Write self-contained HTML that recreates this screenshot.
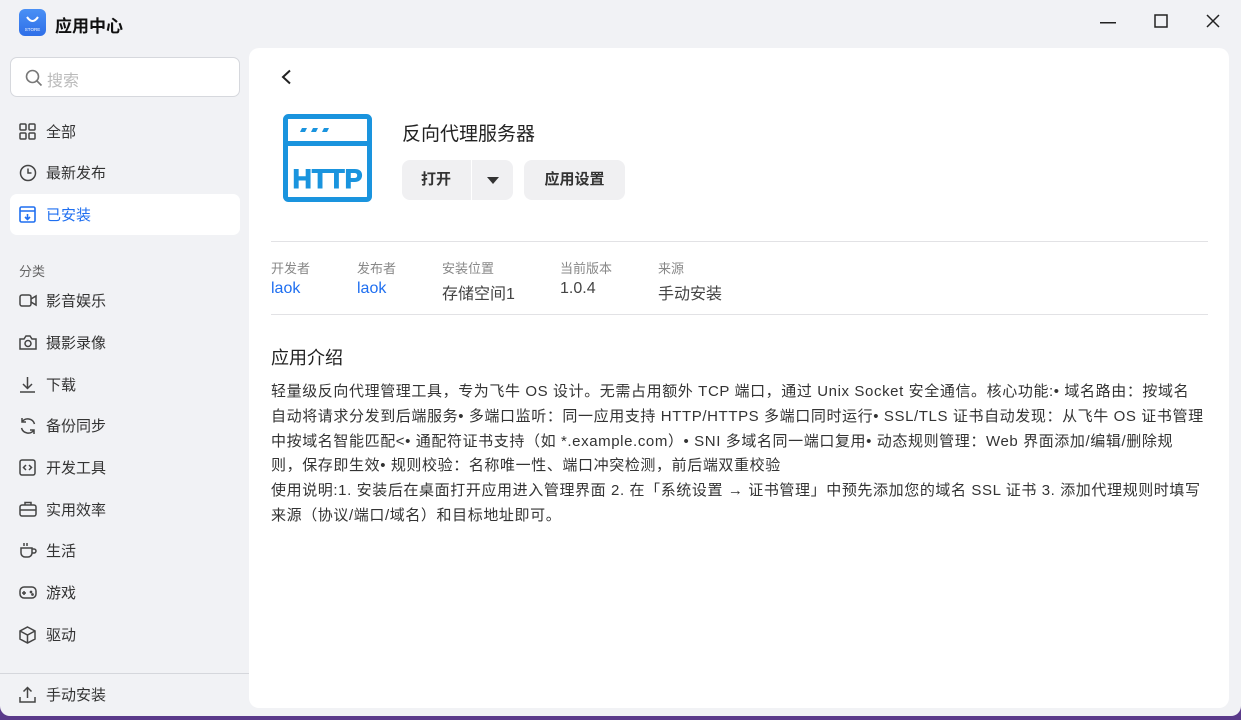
<!DOCTYPE html>
<html><head><meta charset="utf-8"><style>
*{margin:0;padding:0;box-sizing:border-box}
body{width:1241px;height:720px;overflow:hidden;background:#5a3a8a;font-family:"Liberation Sans","Noto Sans CJK SC",sans-serif;position:relative}
.win{position:absolute;left:0;top:0;width:1241px;height:716px;background:#f1f2f5;border-radius:0 0 10px 10px;overflow:hidden}
.title{position:absolute;left:55px;top:12px;font-size:17px;font-weight:bold;color:#111}
.logo{position:absolute;left:19px;top:9px;width:27px;height:27px;border-radius:6px;background:linear-gradient(#4a90f5,#2f6fe8)}
.ctl{position:absolute;top:14px;color:#222}
.search{position:absolute;left:10px;top:57px;width:230px;height:40px;border:1px solid #d6d8dd;border-radius:7px;background:#fff}
.search span{position:absolute;left:36px;top:9px;font-size:16px;color:#bbb}
.item{position:absolute;left:10px;width:230px;height:41px;border-radius:7px;font-size:15px;color:#333}
.item svg{position:absolute;left:9px;top:12px}
.item span{position:absolute;left:36px;top:10px}
.sel{background:#fff;color:#1f6ff0}
.main{position:absolute;left:249px;top:48px;width:980px;height:660px;background:#fff;border-radius:10px}
.btn{position:absolute;top:160px;height:40px;background:#f0f0f2;border-radius:8px;font-size:15px;font-weight:bold;color:#333;line-height:40px;text-align:center}
.lab{position:absolute;top:258px;font-size:13px;color:#888}
.val{position:absolute;top:280px;font-size:16px;color:#444}
.blue{color:#1f6ff0}
.desc{position:absolute;left:271px;top:380px;font-size:15px;line-height:24.8px;color:#333;white-space:nowrap;letter-spacing:0.6px}
</style></head><body>
<div class="win">
<div class="logo"><svg width="27" height="27"><path d="M8 8 Q13.5 16 19 8" stroke="#fff" stroke-width="2" fill="none"/><text x="13.5" y="22" font-size="4.5" fill="#fff" text-anchor="middle" font-family="Liberation Sans">STORE</text></svg></div>
<div class="title">应用中心</div>
<svg class="ctl" style="left:1100px;top:22px" width="16" height="2"><rect width="16" height="1.5" fill="#222"/></svg>
<svg class="ctl" style="left:1154px" width="14" height="14"><rect x="1" y="1" width="12" height="12" fill="none" stroke="#222" stroke-width="1.5"/></svg>
<svg class="ctl" style="left:1206px" width="14" height="14"><path d="M1 1L13 13M13 1L1 13" stroke="#222" stroke-width="1.5"/></svg>

<div class="search"><svg style="position:absolute;left:14px;top:11px" width="18" height="18"><circle cx="7.5" cy="7.5" r="6" fill="none" stroke="#777" stroke-width="1.6"/><path d="M12 12l4.5 4.5" stroke="#777" stroke-width="1.6"/></svg><span>搜索</span></div>

<div class="item" style="top:111px"><svg width="17" height="17" fill="none" stroke="#444" stroke-width="1.5"><rect x="1" y="1" width="6" height="6" rx="1"/><rect x="10" y="1" width="6" height="6" rx="1"/><rect x="1" y="10" width="6" height="6" rx="1"/><rect x="10" y="10" width="6" height="6" rx="1"/></svg><span>全部</span></div>
<div class="item" style="top:152px"><svg width="18" height="18" fill="none" stroke="#444" stroke-width="1.5"><circle cx="9" cy="9" r="7.5"/><path d="M9 4.5V9h3.5"/></svg><span>最新发布</span></div>
<div class="item sel" style="top:194px"><svg width="17" height="17" fill="none" stroke="#1f6ff0" stroke-width="1.6"><rect x="1" y="1" width="15" height="15" rx="1.5"/><path d="M1 5h15M8.5 8v5M6 11l2.5 2.5L11 11"/></svg><span>已安装</span></div>
<div style="position:absolute;left:19px;top:261px;font-size:13px;color:#666">分类</div>
<div class="item" style="top:280px"><svg width="18" height="17" fill="none" stroke="#444" stroke-width="1.5"><rect x="1" y="3" width="11" height="11" rx="2"/><path d="M12 7l5-3v9l-5-3"/></svg><span>影音娱乐</span></div>
<div class="item" style="top:322px"><svg width="18" height="17" fill="none" stroke="#444" stroke-width="1.5"><path d="M1 5h4l2-3h4l2 3h4v10H1z"/><circle cx="9" cy="9.5" r="3"/></svg><span>摄影录像</span></div>
<div class="item" style="top:364px"><svg width="17" height="17" fill="none" stroke="#444" stroke-width="1.5"><path d="M8.5 1v11M4 8l4.5 4.5L13 8M1 16h15"/></svg><span>下载</span></div>
<div class="item" style="top:405px"><svg width="18" height="18" fill="none" stroke="#444" stroke-width="1.5"><path d="M15.5 7A7 7 0 0 0 3 5M2.5 11A7 7 0 0 0 15 13M3 1v4h4M15 17v-4h-4"/></svg><span>备份同步</span></div>
<div class="item" style="top:447px"><svg width="17" height="17" fill="none" stroke="#444" stroke-width="1.5"><rect x="1" y="1" width="15" height="15" rx="2"/><path d="M7 6L4.5 8.5 7 11M10 6l2.5 2.5L10 11"/></svg><span>开发工具</span></div>
<div class="item" style="top:489px"><svg width="18" height="17" fill="none" stroke="#444" stroke-width="1.5"><rect x="1" y="4" width="16" height="11" rx="2"/><path d="M6 4V1.5h6V4M1 9h16"/></svg><span>实用效率</span></div>
<div class="item" style="top:530px"><svg width="18" height="17" fill="none" stroke="#444" stroke-width="1.5"><path d="M2 6h11v5a4 4 0 0 1-4 4H6a4 4 0 0 1-4-4zM13 7h2a2 2 0 0 1 0 4h-2M5 1v3M8 1v3"/></svg><span>生活</span></div>
<div class="item" style="top:572px"><svg width="18" height="17" fill="none" stroke="#444" stroke-width="1.5"><rect x="1" y="3" width="16" height="11" rx="4"/><path d="M5 7v4M3 9h4"/><circle cx="12" cy="8" r=".6"/><circle cx="13.5" cy="10.5" r=".6"/></svg><span>游戏</span></div>
<div class="item" style="top:614px"><svg width="17" height="18" fill="none" stroke="#444" stroke-width="1.5"><path d="M8.5 1L16 5v8l-7.5 4L1 13V5zM1 5l7.5 4L16 5M8.5 9v8"/></svg><span>驱动</span></div>
<div style="position:absolute;left:0;top:673px;width:249px;height:1px;background:#d5d7dc"></div>
<div class="item" style="top:674px"><svg width="17" height="17" fill="none" stroke="#444" stroke-width="1.5"><path d="M8.5 12V1.5M4.5 5.5l4-4 4 4M1 11v5h15v-5"/></svg><span>手动安装</span></div>

<div class="main"></div>
<svg style="position:absolute;left:279px;top:69px" width="14" height="16"><path d="M11 1.5L4 8l7 6.5" stroke="#222" stroke-width="2" fill="none"/></svg>
<svg style="position:absolute;left:283px;top:114px" width="89" height="88"><rect x="2.5" y="2.5" width="84" height="83" rx="3" fill="#fff" stroke="#1a94de" stroke-width="5"/><rect x="2.5" y="27" width="84" height="5" fill="#1a94de"/><path d="M17 18l2-4h5l-2 4zM28 18l2-4h5l-2 4zM39 18l2-4h5l-2 4z" fill="#1a94de"/><text x="44.5" y="74" font-size="27" font-weight="bold" fill="#1a94de" stroke="#1a94de" stroke-width="1" text-anchor="middle" font-family="Liberation Sans" textLength="70" lengthAdjust="spacingAndGlyphs">HTTP</text></svg>
<div style="position:absolute;left:402px;top:119px;font-size:19px;color:#222">反向代理服务器</div>
<div class="btn" style="left:402px;width:111px"><span style="position:absolute;left:19px">打开</span><div style="position:absolute;left:69px;top:0;width:1px;height:40px;background:#fff"></div><svg style="position:absolute;left:85px;top:17px" width="12" height="7"><path d="M0 0h12L6 7z" fill="#333"/></svg></div>
<div class="btn" style="left:524px;width:101px">应用设置</div>
<div style="position:absolute;left:271px;top:241px;width:937px;height:1px;background:#e2e2e5"></div>
<div class="lab" style="left:271px">开发者</div><div class="val blue" style="left:271px">laok</div>
<div class="lab" style="left:357px">发布者</div><div class="val blue" style="left:357px">laok</div>
<div class="lab" style="left:442px">安装位置</div><div class="val" style="left:442px">存储空间1</div>
<div class="lab" style="left:560px">当前版本</div><div class="val" style="left:560px">1.0.4</div>
<div class="lab" style="left:658px">来源</div><div class="val" style="left:658px">手动安装</div>
<div style="position:absolute;left:271px;top:314px;width:937px;height:1px;background:#e2e2e5"></div>
<div style="position:absolute;left:271px;top:344px;font-size:18px;color:#222">应用介绍</div>
<div class="desc">轻量级反向代理管理工具，专为飞牛 OS 设计。无需占用额外 TCP 端口，通过 Unix Socket 安全通信。核心功能:• 域名路由：按域名<br>自动将请求分发到后端服务• 多端口监听：同一应用支持 HTTP/HTTPS 多端口同时运行• SSL/TLS 证书自动发现：从飞牛 OS 证书管理<br>中按域名智能匹配<• 通配符证书支持（如 *.example.com）• SNI 多域名同一端口复用• 动态规则管理：Web 界面添加/编辑/删除规<br>则，保存即生效• 规则校验：名称唯一性、端口冲突检测，前后端双重校验<br>使用说明:1. 安装后在桌面打开应用进入管理界面 2. 在「系统设置 → 证书管理」中预先添加您的域名 SSL 证书 3. 添加代理规则时填写<br>来源（协议/端口/域名）和目标地址即可。</div>
</div>
</body></html>
